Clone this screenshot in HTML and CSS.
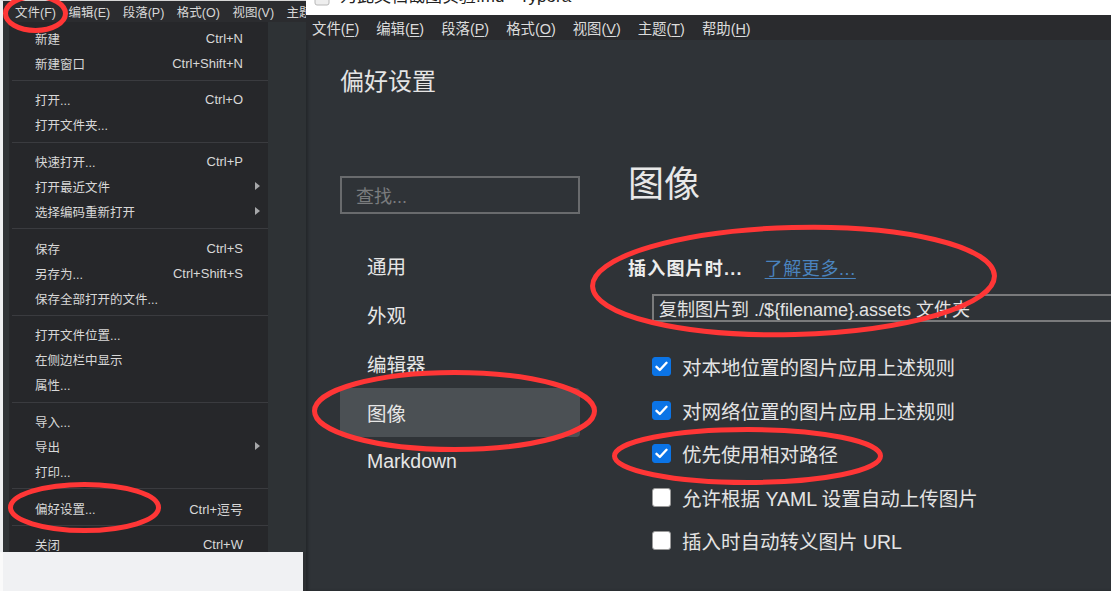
FILE: index.html
```html
<!DOCTYPE html>
<html lang="zh-CN">
<head>
<meta charset="utf-8">
<title>Typora 偏好设置</title>
<link rel="stylesheet" href="styles.css">
</head>
<body>
<div class="screen">
  <div class="left-shot">
    <div class="lwin">
      <div class="lmenubar">
        <span>文件(F)</span><span>编辑(E)</span><span>段落(P)</span><span>格式(O)</span><span>视图(V)</span><span>主题(T)</span>
      </div>
      <div class="lbody">
        <div class="dropdown">
          <div class="mi"><span class="lbl">新建</span><span class="sc">Ctrl+N</span><span class="arr"></span></div>
          <div class="mi"><span class="lbl">新建窗口</span><span class="sc">Ctrl+Shift+N</span><span class="arr"></span></div>
          <div class="sep"></div>
          <div class="mi"><span class="lbl">打开...</span><span class="sc">Ctrl+O</span><span class="arr"></span></div>
          <div class="mi"><span class="lbl">打开文件夹...</span><span class="sc"></span><span class="arr"></span></div>
          <div class="sep"></div>
          <div class="mi"><span class="lbl">快速打开...</span><span class="sc">Ctrl+P</span><span class="arr"></span></div>
          <div class="mi"><span class="lbl">打开最近文件</span><span class="sc"></span><span class="arr"><i class="tri"></i></span></div>
          <div class="mi"><span class="lbl">选择编码重新打开</span><span class="sc"></span><span class="arr"><i class="tri"></i></span></div>
          <div class="sep"></div>
          <div class="mi"><span class="lbl">保存</span><span class="sc">Ctrl+S</span><span class="arr"></span></div>
          <div class="mi"><span class="lbl">另存为...</span><span class="sc">Ctrl+Shift+S</span><span class="arr"></span></div>
          <div class="mi"><span class="lbl">保存全部打开的文件...</span><span class="sc"></span><span class="arr"></span></div>
          <div class="sep"></div>
          <div class="mi"><span class="lbl">打开文件位置...</span><span class="sc"></span><span class="arr"></span></div>
          <div class="mi"><span class="lbl">在侧边栏中显示</span><span class="sc"></span><span class="arr"></span></div>
          <div class="mi"><span class="lbl">属性...</span><span class="sc"></span><span class="arr"></span></div>
          <div class="sep"></div>
          <div class="mi"><span class="lbl">导入...</span><span class="sc"></span><span class="arr"></span></div>
          <div class="mi"><span class="lbl">导出</span><span class="sc"></span><span class="arr"><i class="tri"></i></span></div>
          <div class="mi"><span class="lbl">打印...</span><span class="sc"></span><span class="arr"></span></div>
          <div class="sep"></div>
          <div class="mi"><span class="lbl">偏好设置...</span><span class="sc">Ctrl+逗号</span><span class="arr"></span></div>
          <div class="sep"></div>
          <div class="mi"><span class="lbl">关闭</span><span class="sc">Ctrl+W</span><span class="arr"></span></div>
        </div>
        <div class="editor-strip"></div>
      </div>
    </div>
    <div class="lbottom"></div>
  </div>

  <div class="right-shot">
    <div class="titlebar">
      <svg class="ticon" width="16" height="18" viewBox="0 0 16 18"><path d="M2 0 H11 L15 4 V15 Q15 17 13 17 H3 Q1 17 1 15 V0 Z" fill="#eeeeee" stroke="#b8b8b8" stroke-width="1"/></svg>
      <span class="ttl">为此文档截图实验.md - Typora</span>
    </div>
    <div class="rmenubar">
      <span>文件(<u>F</u>)</span><span>编辑(<u>E</u>)</span><span>段落(<u>P</u>)</span><span>格式(<u>O</u>)</span><span>视图(<u>V</u>)</span><span>主题(<u>T</u>)</span><span>帮助(<u>H</u>)</span>
    </div>
    <div class="prefs">
      <h1 class="ptitle">偏好设置</h1>
      <div class="prefs-row">
        <aside class="side">
          <div class="search">查找...</div>
          <nav class="nav">
            <div class="nav-item">通用</div>
            <div class="nav-item">外观</div>
            <div class="nav-item">编辑器</div>
            <div class="nav-item active">图像</div>
            <div class="nav-item">Markdown</div>
          </nav>
        </aside>
        <main class="pane">
          <h2 class="stitle">图像</h2>
          <div class="hrow"><b class="hlabel">插入图片时...</b><a class="more">了解更多...</a></div>
          <div class="select">复制图片到 ./${filename}.assets 文件夹</div>
          <div class="checks">
            <div class="chk-row"><span class="box on"><svg width="13" height="11" viewBox="0 0 13 11"><path d="M1.5 5.8 L4.8 9 L11.5 1.8" fill="none" stroke="#fff" stroke-width="2.4" stroke-linecap="round" stroke-linejoin="round"/></svg></span><span>对本地位置的图片应用上述规则</span></div>
            <div class="chk-row"><span class="box on"><svg width="13" height="11" viewBox="0 0 13 11"><path d="M1.5 5.8 L4.8 9 L11.5 1.8" fill="none" stroke="#fff" stroke-width="2.4" stroke-linecap="round" stroke-linejoin="round"/></svg></span><span>对网络位置的图片应用上述规则</span></div>
            <div class="chk-row"><span class="box on"><svg width="13" height="11" viewBox="0 0 13 11"><path d="M1.5 5.8 L4.8 9 L11.5 1.8" fill="none" stroke="#fff" stroke-width="2.4" stroke-linecap="round" stroke-linejoin="round"/></svg></span><span>优先使用相对路径</span></div>
            <div class="chk-row"><span class="box"></span><span>允许根据 YAML 设置自动上传图片</span></div>
            <div class="chk-row"><span class="box"></span><span>插入时自动转义图片 URL</span></div>
          </div>
        </main>
      </div>
    </div>
  </div>

  <svg class="marks" width="1111" height="591" viewBox="0 0 1111 591">
    <g fill="none" stroke="#ff3636" stroke-width="5">
      <ellipse cx="35.5" cy="13.5" rx="30" ry="17"/>
      <ellipse cx="84.5" cy="507.5" rx="74" ry="23"/>
      <ellipse cx="793.5" cy="281" rx="201" ry="53.5" transform="rotate(-1.5 793.5 281)"/>
      <ellipse cx="454.5" cy="411" rx="140" ry="38.5"/>
      <ellipse cx="747.5" cy="456" rx="133" ry="26.5"/>
    </g>
  </svg>
</div>
</body>
</html>
```

FILE: styles.css
```css
html, body {
  margin: 0;
  padding: 0;
  background: #2f3337;
  overflow: hidden;
}

.screen {
  position: relative;
  display: flex;
  width: 1111px;
  height: 591px;
  overflow: hidden;
  background: #2f3337;
  font-family: "Liberation Sans", "Noto Sans CJK SC", sans-serif;
}

/* ---------- left screenshot (File menu) ---------- */
.left-shot {
  width: 306px;
  flex: none;
  display: flex;
  flex-direction: column;
  background: #2c2f32;
}

.lwin {
  height: 552px;
  flex: none;
  box-sizing: border-box;
  border-left: 3px solid #eceef0;
  border-top: 1px solid #d6d6d6;
  display: flex;
  flex-direction: column;
  overflow: hidden;
}

.lmenubar {
  height: 21px;
  flex: none;
  background: #2b2c2f;
  display: flex;
  align-items: center;
  gap: 12.5px;
  padding-left: 12px;
  font-size: 12.5px;
  color: #d8d8d8;
  white-space: nowrap;
  overflow: hidden;
}

.lbody {
  flex: 1;
  display: flex;
  min-height: 0;
  background: #2e3235;
}

.dropdown {
  width: 259px;
  flex: none;
  margin-left: 6px;
  padding-top: 3.5px;
  box-sizing: border-box;
  background: #26272a;
}

.mi {
  height: 25px;
  display: flex;
  align-items: center;
  padding-left: 26px;
  font-size: 12.5px;
  color: #d8d8d8;
  white-space: nowrap;
}

.mi .lbl { flex: 1; }

.mi .sc {
  font-size: 13px;
  color: #d8d8d8;
}

.mi .arr {
  width: 25px;
  flex: none;
  display: flex;
  align-items: center;
}

.tri {
  display: block;
  margin-left: 12px;
  width: 0;
  height: 0;
  border-top: 4px solid transparent;
  border-bottom: 4px solid transparent;
  border-left: 5px solid #a6a7a9;
}

.sep {
  height: 1px;
  margin: 4.5px 0 6.2px 3px;
  background: #3a3b3f;
}

.editor-strip {
  flex: 1;
  background: #2e3235;
}

.lbottom {
  flex: 1;
  margin-right: 3px;
  background: #f0f1f3;
  border-left: 3px solid #fafafa;
}

/* ---------- right screenshot (preferences) ---------- */
.right-shot {
  flex: 1;
  min-width: 0;
  display: flex;
  flex-direction: column;
  background: #2f3337;
  box-shadow: inset 2px 0 3px rgba(0, 0, 0, 0.25);
}

.titlebar {
  height: 15px;
  flex: none;
  background: #ffffff;
  overflow: hidden;
  display: flex;
  align-items: flex-start;
  gap: 10px;
  padding-left: 8px;
}

.ticon {
  flex: none;
  margin-top: -12px;
}

.ttl {
  font-size: 17px;
  line-height: 20px;
  margin-top: -13px;
  color: #222;
  white-space: nowrap;
}

.rmenubar {
  height: 25px;
  flex: none;
  background: #2a2b2e;
  display: flex;
  align-items: center;
  gap: 17px;
  padding-left: 6px;
  font-size: 14.4px;
  color: #dcdcdc;
  white-space: nowrap;
}

.rmenubar u {
  text-decoration-thickness: 1px;
  text-underline-offset: 2px;
}

.prefs {
  flex: 1;
  padding: 26px 0 0 34px;
}

.ptitle {
  margin: 0;
  font-size: 24px;
  line-height: 32px;
  font-weight: normal;
  color: #e4e4e4;
}

.prefs-row {
  display: flex;
  gap: 48px;
  margin-top: 65px;
}

.side {
  width: 240px;
  flex: none;
  padding-top: 13px;
}

.search {
  height: 38px;
  box-sizing: border-box;
  border: 2px solid #696b6d;
  padding-left: 14px;
  display: flex;
  align-items: center;
  font-size: 18px;
  color: #7a7c7e;
}

.nav {
  margin-top: 27px;
}

.nav-item {
  height: 49px;
  display: flex;
  align-items: center;
  padding-left: 27px;
  font-size: 19.5px;
  color: #e6e6e6;
  border-radius: 4px;
}

.nav-item.active {
  background: #4b5054;
}

.pane {
  flex: 1;
  min-width: 0;
}

.stitle {
  margin: 0;
  font-size: 36px;
  line-height: 44px;
  font-weight: normal;
  color: #e8e8e8;
}

.hrow {
  margin-top: 49px;
  display: flex;
  align-items: center;
  gap: 22px;
  line-height: 26px;
  font-size: 18px;
}

.hlabel {
  font-weight: bold;
  color: #ececec;
  letter-spacing: 1.2px;
}

.more {
  color: #4a83be;
  text-decoration: underline;
  text-underline-offset: 3px;
  letter-spacing: 0.6px;
}

.select {
  margin: 12px 0 0 24px;
  height: 28px;
  box-sizing: border-box;
  border: 2px solid #7a7b7c;
  border-right: none;
  padding-left: 5px;
  display: flex;
  align-items: center;
  font-size: 18px;
  color: #e2e2e2;
  white-space: nowrap;
}

.checks {
  margin: 22.7px 0 0 24px;
}

.chk-row {
  height: 43.6px;
  display: flex;
  align-items: center;
  gap: 11px;
  font-size: 19.5px;
  color: #e4e4e4;
  white-space: nowrap;
}

.box {
  width: 19px;
  height: 19px;
  flex: none;
  box-sizing: border-box;
  border-radius: 3px;
  background: #ffffff;
  border: 1px solid #9a9a9a;
  display: flex;
  align-items: center;
  justify-content: center;
}

.box.on {
  background: #0b74e6;
  border-color: #0b74e6;
}

/* annotation ellipses drawn over the screenshot */
.marks {
  position: absolute;
  left: 0;
  top: 0;
  pointer-events: none;
}
```
